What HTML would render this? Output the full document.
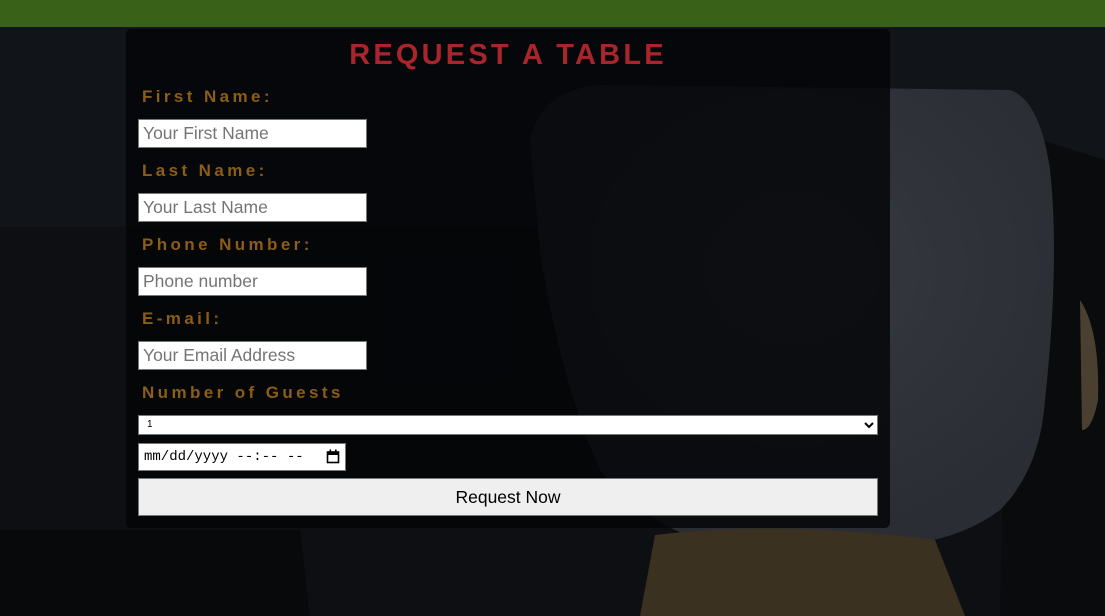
<!DOCTYPE html>
<html><head><style>
html,body{margin:0;padding:0;width:1105px;height:616px;overflow:hidden;background:#0b0d11;font-family:"Liberation Sans",sans-serif;}
.abs{position:absolute;}
.bar{left:0;top:0;width:1105px;height:27px;background:#3a6118;}
.panel{left:126px;top:29px;width:764px;height:499px;background:rgba(3,4,6,0.8);border-radius:5px;}
h1{position:absolute;left:0;width:1016px;top:39px;margin:0;text-align:center;color:#a8262b;font-size:29px;font-weight:bold;letter-spacing:3.2px;}
.lab{position:absolute;left:142px;color:#8c5d16;font-weight:bold;font-size:17px;letter-spacing:3.4px;}
.inp{position:absolute;left:138px;width:223px;height:27px;background:#fff;border:1px solid #777;color:#757575;font-size:17.5px;line-height:27px;padding-left:4px;}
</style></head><body>
<svg class="abs" style="left:0;top:0" width="1105" height="616">
<defs><radialGradient id="g" cx="0.5" cy="0.4" r="0.6"><stop offset="0" stop-color="#363a41"/><stop offset="1" stop-color="#2a2d33"/></radialGradient></defs>
<rect width="1105" height="616" fill="#0d0f13"/>
<rect x="0" y="27" width="1105" height="200" fill="#111419"/>
<path d="M1010 130 L1105 160 L1105 616 L1000 616 Z" fill="#0a0b0d"/>
<path d="M530 140 Q540 90 600 85 L1010 90 Q1040 100 1050 170 Q1060 260 1045 400 Q1040 470 1000 510 Q960 540 900 545 L700 540 Q640 520 600 470 Q560 380 540 250 Z" fill="url(#g)"/>
<path d="M1080 300 Q1100 330 1098 400 Q1092 430 1082 430 Z" fill="#4a4030"/>
<path d="M655 535 Q780 520 935 540 L965 616 L640 616 Z" fill="#3a3120"/>
<path d="M300 530 L310 616 L0 616 L0 530 Z" fill="#08090b"/>
</svg>
<div class="abs bar"></div>
<div class="abs panel"></div>
<h1>REQUEST A TABLE</h1>
<div class="lab" style="top:87px">First Name:</div>
<div class="inp" style="top:119px">Your First Name</div>
<div class="lab" style="top:161px">Last Name:</div>
<div class="inp" style="top:193px">Your Last Name</div>
<div class="lab" style="top:235px">Phone Number:</div>
<div class="inp" style="top:267px">Phone number</div>
<div class="lab" style="top:309px">E-mail:</div>
<div class="inp" style="top:341px">Your Email Address</div>
<div class="lab" style="top:383px">Number of Guests</div>
<div class="abs" style="left:138px;top:415px;width:738px;height:18px;background:#fff;border:1px solid #777;font-size:10px;line-height:18px;">
<span style="margin-left:8px;color:#000">1</span>
<svg style="position:absolute;right:3px;top:5px" width="10" height="8"><path d="M1 2 L5 6 L9 2" stroke="#000" stroke-width="2" fill="none"/></svg></div>
<div class="abs" style="left:138px;top:443px;width:206px;height:26px;background:#fff;border:1px solid #777;font-family:'Liberation Mono',monospace;font-size:14px;line-height:26px;color:#000;">
<span style="margin-left:5px">mm/dd/yyyy --:-- --</span>
<svg style="position:absolute;right:5px;top:5px" width="14" height="15"><rect x="1.5" y="3" width="11" height="10.5" fill="none" stroke="#000" stroke-width="1.6"/><rect x="1.5" y="3" width="11" height="3" fill="#000"/><rect x="3.5" y="0.5" width="1.6" height="3" fill="#000"/><rect x="9" y="0.5" width="1.6" height="3" fill="#000"/></svg></div>
<div class="abs" style="left:138px;top:478px;width:738px;height:36px;background:#efefef;border:1px solid #777;text-align:center;font-size:17.5px;line-height:36px;color:#000;">Request Now</div>
</body></html>
